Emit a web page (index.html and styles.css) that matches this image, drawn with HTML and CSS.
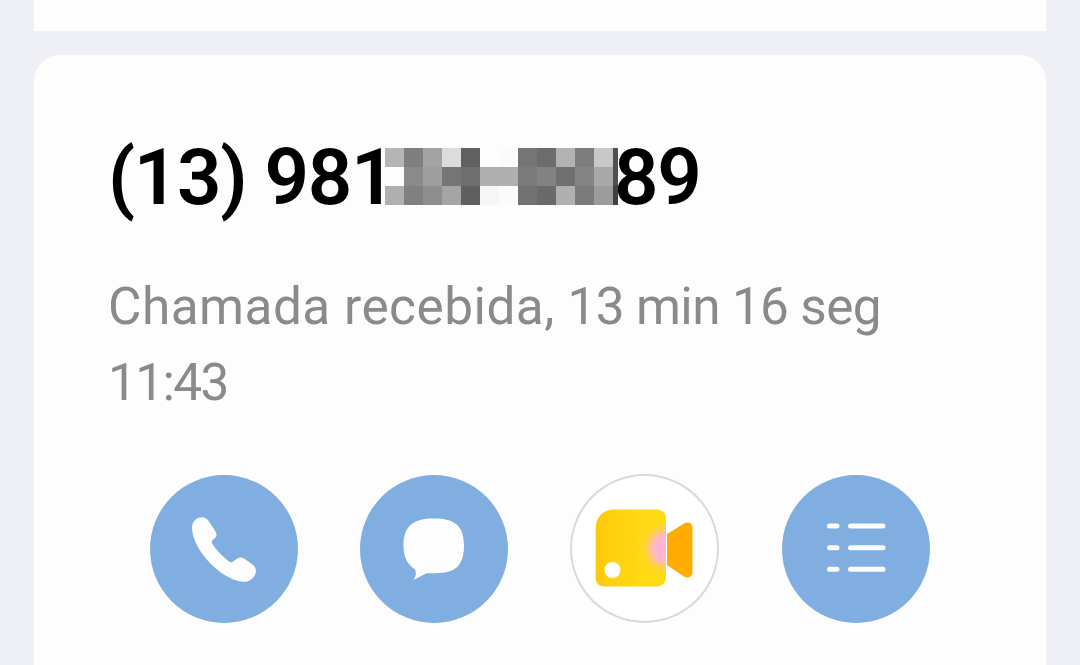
FILE: index.html
```html
<!DOCTYPE html>
<html lang="pt">
<head>
<meta charset="utf-8">
<title>Chamada</title>
<link rel="stylesheet" href="styles.css">
</head>
<body>
<div class="page">
  <div class="card-top"></div>
  <section class="card">
    <h1 class="number">
      <span class="head">(13) 981</span>
      <span class="mosaic" aria-hidden="true">
        <i class="c1"></i><i class="c2"></i><i class="c3"></i><i class="c4"></i><i class="c5"></i><i class="c6"></i><i class="c7"></i><i class="c8"></i><i class="c9"></i><i class="c10"></i><i class="c11"></i><i class="c12"></i><i class="s1"></i>
        <i class="c13"></i><i class="c14"></i><i class="c15"></i><i class="c16"></i><i class="c17"></i><i class="c18"></i><i class="c19"></i><i class="c20"></i><i class="c21"></i><i class="c22"></i><i class="c23"></i><i class="c24"></i><i class="s2"></i>
        <i class="c25"></i><i class="c26"></i><i class="c27"></i><i class="c28"></i><i class="c29"></i><i class="c30"></i><i class="c31"></i><i class="c32"></i><i class="c33"></i><i class="c34"></i><i class="c35"></i><i class="c36"></i><i class="s3"></i>
      </span>
      <span class="tail">89</span>
    </h1>
    <p class="detail"><span class="lead">Chamada recebida,</span> <span class="nums">13 min 16 seg</span></p>
    <p class="detail time">11:43</p>
    <div class="actions">
      <div class="btn">
        <svg viewBox="0 0 148 148" class="icon"><path fill="#fdfdfd" d="M42 54C41.500 47 46.500 42.300 51.500 42.300C55 42.300 57.500 44 59 46.500L65.500 56.500C67 59 67 61.500 64.500 63.500L62.500 65C61.500 66 61.500 67.500 62.500 69C66.500 75.500 72.500 81.500 79 86.500C80.500 87.500 82.500 87.500 84 86L86.500 84C89 82 91.500 82 94 83.500L102.500 89.500C105.500 91.500 106.500 95 105.500 98.500C104 103.500 99 107 93.500 106.800C85 106.500 73 100.500 62.500 90.500C51 79.500 43 66 42 54Z"/></svg>
      </div>
      <div class="btn">
        <svg viewBox="0 0 148 148" class="icon"><path fill="#fdfdfd" d="M74 43.500C95 43.500 104 51 104 70.500C104 90 96 98.200 76 98.200L66.500 98.300L53.500 105C56 101 56.500 98 55 94.500C47 89 43.500 82 43.500 70.500C43.500 51 53 43.500 74 43.500Z"/></svg>
      </div>
      <div class="btn btn-video">
        <svg viewBox="0 0 149 149" class="icon">
          <defs>
            <radialGradient id="pink" gradientUnits="userSpaceOnUse" cx="97" cy="74" r="30">
              <stop offset="0" stop-color="#ffaee0"/>
              <stop offset="0.45" stop-color="#ffb8c8"/>
              <stop offset="0.75" stop-color="#ffd050" stop-opacity="0.6"/>
              <stop offset="1" stop-color="#ffd60f" stop-opacity="0"/>
            </radialGradient>
            <linearGradient id="body" x1="0" y1="0" x2="1" y2="0">
              <stop offset="0" stop-color="#ffc90a"/>
              <stop offset="0.6" stop-color="#ffd912"/>
              <stop offset="1" stop-color="#ffdb14"/>
            </linearGradient>
          </defs>
          <path fill="#ffab00" d="M97 60L114 49.500C118.500 47 122.500 49.500 122.500 54V98C122.500 102.500 118.500 105 114 102.500L97 91Z"/>
          <path fill="url(#body)" d="M44 35.500H87C92.500 35.500 96 39 96 44.500V103C96 108.500 92.500 112.500 87 112.500H34C29 112.500 25.700 109 25.700 104V54C25.700 43.500 33 35.500 44 35.500Z"/>
          <path fill="url(#pink)" d="M67 44H96V104H67Z"/>
          <circle cx="42.500" cy="96" r="8" fill="#fff"/>
        </svg>
      </div>
      <div class="btn">
        <svg viewBox="0 0 148 148" class="icon">
          <g stroke="#fdfdfd" stroke-width="5" stroke-linecap="round">
            <path d="M47.500 51H55M68.500 51H101"/>
            <path d="M47.500 72.700H55M68.500 72.700H101"/>
            <path d="M47.500 94.300H55M68.500 94.300H101"/>
          </g>
        </svg>
      </div>
    </div>
  </section>
</div>
</body>
</html>
```
FILE: styles.css
```css
html, body {
  margin: 0;
  height: 100%;
  overflow: hidden;
  background: #eff0f5;
}
.page {
  height: 665px;
  padding: 0 34px;
  display: flex;
  flex-direction: column;
  gap: 24px;
  font-family: Roboto, "Noto Sans", sans-serif;
}
.card-top {
  height: 31px;
  flex: none;
  background: #fdfdfd;
}
.card {
  flex: 1;
  background: #fdfdfd;
  border-radius: 26px 26px 0 0;
  padding: 77px 0 0 74px;
}
.number {
  margin: 0;
  display: flex;
  align-items: center;
  height: 88px;
  font-size: 78px;
  line-height: 88px;
  letter-spacing: -1.300px;
  font-weight: 600;
  color: #000;
}
.head {
  width: 277px;
  flex: none;
  white-space: nowrap;
  padding-top: 4px;
}
.mosaic {
  display: grid;
  grid-template-columns: repeat(12, 19px) 5px;
  grid-template-rows: repeat(3, 19px);
  flex: none;
}
.tail {
  margin-left: -4px;
  padding-top: 4px;
}
.mosaic i { display: block; }
.c1 { background: #b5b5b5; } .c2 { background: #7f7f7f; } .c3 { background: #a3a3a3; }
.c4 { background: #dcdcdc; } .c5 { background: #606060; } .c6 { background: #fdfdfd; }
.c7 { background: #fbfbfb; } .c8 { background: #757575; } .c9 { background: #6c6c6c; }
.c10 { background: #b2b2b2; } .c11 { background: #7d7d7d; } .c12 { background: #c8c8c8; }
.c13 { background: #fdfdfd; } .c14 { background: #8a8a8a; } .c15 { background: #9e9e9e; }
.c16 { background: #757575; } .c17 { background: #6e6e6e; } .c18 { background: #b0b0b0; }
.c19 { background: #b0b0b0; } .c20 { background: #7a7a7a; } .c21 { background: #828282; }
.c22 { background: #707070; } .c23 { background: #848484; } .c24 { background: #a8a8a8; }
.c25 { background: #b0b0b0; } .c26 { background: #808080; } .c27 { background: #8e8e8e; }
.c28 { background: #a5a5a5; } .c29 { background: #5f5f5f; } .c30 { background: #f6f6f6; }
.c31 { background: #fbfbfb; } .c32 { background: #727272; } .c33 { background: #6a6a6a; }
.c34 { background: #b0b0b0; } .c35 { background: #7b7b7b; } .c36 { background: #9c9c9c; }
.s1 { background: #505050; } .s2 { background: #505050; } .s3 { background: #404040; }
.detail {
  margin: 0;
  font-size: 51.300px;
  line-height: 76px;
  color: #8a8a8a;
}
.lead { letter-spacing: 0.500px; }
.nums { letter-spacing: -0.650px; }
.time { letter-spacing: -1.600px; }
.number + .detail { margin-top: 49px; }
.actions {
  display: flex;
  align-items: center;
  gap: 62px;
  margin: 53px 0 0 42px;
}
.btn {
  width: 148px;
  height: 148px;
  flex: none;
  border-radius: 50%;
  background: #80aee0;
}
.btn-video {
  width: 149px;
  height: 149px;
  background: #fff;
  box-shadow: inset 0 0 0 2px #d9d9d9;
  margin-right: 1px;
}
.icon {
  display: block;
  width: 100%;
  height: 100%;
}
```
